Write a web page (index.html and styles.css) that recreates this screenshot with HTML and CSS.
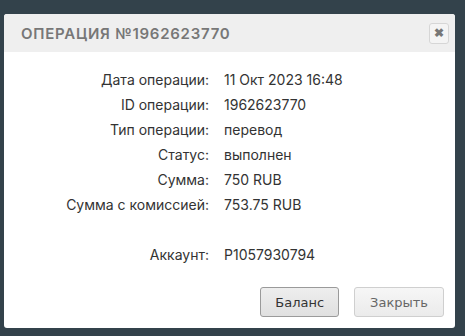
FILE: index.html
```html
<!DOCTYPE html>
<html lang="ru">
<head>
    <meta charset="UTF-8">
    <title>Операция</title>
    <link rel="stylesheet" href="styles.css">
</head>
<body>
    <div class="modal">
        <div class="modal-header">
            <h3 class="modal-title">Операция №1962623770</h3>
            <button class="close-btn">&#10006;</button>
        </div>
        <div class="modal-body">
            <div class="info-row"><span class="info-label">Дата операции:</span><span class="info-value">11 Окт 2023 16:48</span></div>
            <div class="info-row"><span class="info-label">ID операции:</span><span class="info-value">1962623770</span></div>
            <div class="info-row"><span class="info-label">Тип операции:</span><span class="info-value">перевод</span></div>
            <div class="info-row"><span class="info-label">Статус:</span><span class="info-value">выполнен</span></div>
            <div class="info-row"><span class="info-label">Сумма:</span><span class="info-value">750 RUB</span></div>
            <div class="info-row"><span class="info-label">Сумма с комиссией:</span><span class="info-value">753.75 RUB</span></div>
            <div class="info-row info-gap"><span class="info-label">Аккаунт:</span><span class="info-value">P1057930794</span></div>
        </div>
        <div class="modal-footer">
            <button class="btn btn-active">Баланс</button>
            <button class="btn">Закрыть</button>
        </div>
    </div>
</body>
</html>
```

FILE: styles.css
```css
body {
    margin: 0;
    padding: 14px 10px 0 4px;
    background: #33424b;
    font-family: Inter, "Noto Sans", sans-serif;
    height: 336px;
    box-sizing: border-box;
}
.modal {
    background: #fff;
    border-radius: 3px;
    overflow: hidden;
    height: 314px;
}
.modal-header {
    display: flex;
    align-items: center;
    justify-content: space-between;
    height: 38px;
    padding: 0 6px 0 17px;
    background: #efefef;
}
.modal-title {
    margin: 0;
    font-size: 15px;
    font-weight: 600;
    letter-spacing: 0.75px;
    text-transform: uppercase;
    color: #777;
}
.close-btn {
    width: 20px;
    height: 21px;
    padding: 0;
    border: 1px solid #d6d6d6;
    border-radius: 3px;
    background: #f4f4f4;
    color: #777;
    font-size: 12px;
    font-weight: bold;
    line-height: 19px;
}
.modal-body {
    padding: 15px 0 0;
}
.info-row {
    display: flex;
    height: 25px;
    align-items: center;
    font-size: 14px;
    color: #333;
}
.info-gap {
    margin-top: 25px;
}
.info-label {
    width: 205px;
    text-align: right;
}
.info-value {
    margin-left: 15px;
}
.modal-footer {
    display: flex;
    justify-content: flex-end;
    gap: 15px;
    padding: 20px 11px 0 0;
}
.btn {
    height: 30px;
    padding: 0 15px;
    border: 1px solid #cfcfcf;
    border-radius: 3px;
    background: linear-gradient(#f6f6f6, #ebebeb);
    font-family: "DejaVu Sans", sans-serif;
    font-size: 13px;
    color: #666;
}
.btn-active {
    padding: 0 14px;
    border-color: #9a9a9a;
    background: linear-gradient(#eeeeee, #e0e0e0);
    color: #333;
}
```
